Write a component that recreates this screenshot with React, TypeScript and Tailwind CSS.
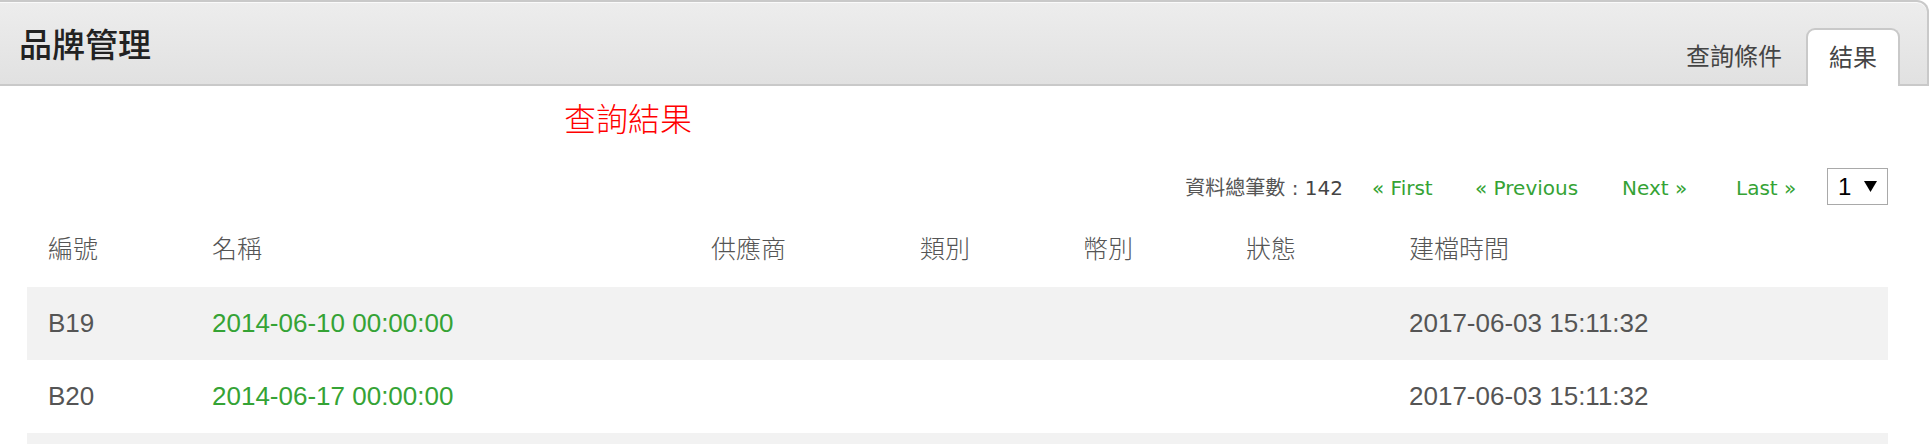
import React from "react";

const COLS = [
  { label: "編號", w: "w-[164px]" },
  { label: "名稱", w: "w-[499px]" },
  { label: "供應商", w: "w-[209px]" },
  { label: "類別", w: "w-[163px]" },
  { label: "幣別", w: "w-[163px]" },
  { label: "狀態", w: "w-[163px]" },
  { label: "建檔時間", w: "w-[500px]" },
];

const ROWS = [
  { id: "B19", name: "2014-06-10 00:00:00", created: "2017-06-03 15:11:32" },
  { id: "B20", name: "2014-06-17 00:00:00", created: "2017-06-03 15:11:32" },
  { id: "B21", name: "2014-06-24 00:00:00", created: "2017-06-03 15:11:32" },
];

const cell = "pl-[21px] font-['Liberation_Sans',Arial,sans-serif] text-[26px]";

function Header() {
  return (
    <div className="flex h-[86px] items-end justify-between rounded-tr-[12px] border-y-2 border-r-2 border-[#c9c9c9] bg-gradient-to-b from-[#ededed] to-[#e1e1e1] shadow-[inset_0_1px_0_#fafafa]">
      <h1 className="self-center pl-[19px] font-['Noto_Sans_CJK_TC',sans-serif] text-[33px] leading-none font-medium text-[#222]">
        品牌管理
      </h1>
      <div className="-mb-[2px] mr-[27px] flex items-end font-['Noto_Sans_CJK_TC',sans-serif] text-[24px] text-[#444]">
        <div className="flex h-[58px] items-center px-[24px] pb-[4px]">查詢條件</div>
        <div className="flex h-[58px] items-center rounded-t-[9px] border-2 border-b-0 border-[#c9c9c9] bg-white px-[21px] pb-[4px]">
          結果
        </div>
      </div>
    </div>
  );
}

function Pager() {
  return (
    <div className="mt-[32px] flex h-[37px] items-center justify-end font-['DejaVu_Sans','Noto_Sans_CJK_TC',sans-serif] text-[20px]">
      <span className="mr-[29px] pt-[2px] text-[#555]">
        資料總筆數 : <span className="text-[#444]">142</span>
      </span>
      <span className="w-[103px] pt-[2px] text-[#35a335]">« First</span>
      <span className="w-[147px] pt-[2px] text-[#35a335]">« Previous</span>
      <span className="w-[114px] pt-[2px] text-[#35a335]">Next »</span>
      <span className="w-[91px] pt-[2px] text-[#35a335]">Last »</span>
      <div className="flex h-[37px] w-[61px] items-center border border-[#a9a9a9] bg-white pl-[10px] font-['Liberation_Sans',sans-serif] text-[24px] text-black">
        <span className="w-[26px]">1</span>
        <svg width="13" height="11" viewBox="0 0 13 11">
          <polygon points="0,0 13,0 6.5,11" fill="#000" />
        </svg>
      </div>
    </div>
  );
}

export default function App() {
  return (
    <div className="min-h-screen w-full bg-white">
      <Header />
      <div className="pl-[27px] pr-[41px]">
        <div className="mt-[12px] h-[38px] pl-[537px] font-['Noto_Sans_CJK_TC',serif] text-[32px] leading-[38px] font-light text-[#ff0000]">
          查詢結果
        </div>
        <Pager />
        <table className="mt-[9px] w-full table-fixed border-collapse">
          <colgroup>
            {COLS.map((c) => (
              <col key={c.label} className={c.w} />
            ))}
          </colgroup>
          <thead>
            <tr className="h-[73px]">
              {COLS.map((c) => (
                <th
                  key={c.label}
                  className="pb-[5px] pl-[21px] text-left font-['Noto_Sans_CJK_TC',sans-serif] text-[25px] font-light text-[#555]"
                >
                  {c.label}
                </th>
              ))}
            </tr>
          </thead>
          <tbody>
            {ROWS.map((r, i) => (
              <tr key={r.id} className={i % 2 === 0 ? "h-[73px] bg-[#f2f2f2]" : "h-[73px] bg-white"}>
                <td className={cell + " text-[#555]"}>{r.id}</td>
                <td className={cell + " text-[#35a335]"}>{r.name}</td>
                <td />
                <td />
                <td />
                <td />
                <td className={cell + " text-[#555]"}>{r.created}</td>
              </tr>
            ))}
          </tbody>
        </table>
      </div>
    </div>
  );
}
